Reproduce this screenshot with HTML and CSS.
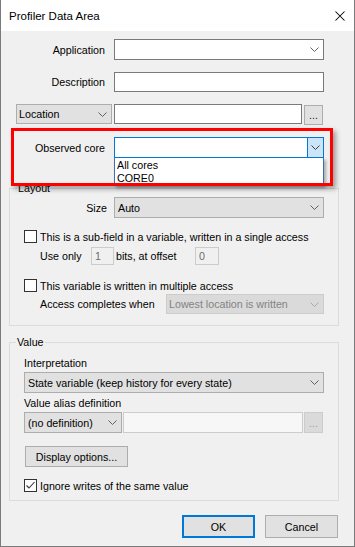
FILE: index.html
```html
<!DOCTYPE html>
<html>
<head>
<meta charset="utf-8">
<title>Profiler Data Area</title>
<link rel="stylesheet" href="styles.css">
</head>
<body>
<div class="window">
  <div class="titlebar">
    <span class="title">Profiler Data Area</span>
    <svg class="close" width="10" height="10" viewBox="0 0 10 10"><path d="M0.5 0.5L9.5 9.5M9.5 0.5L0.5 9.5" stroke="#000" stroke-width="1.05" fill="none"/></svg>
  </div>
  <div class="client">
    <div class="row top-row r-app">
      <span class="lbl">Application</span>
      <div class="combo edit w210"><span class="val"></span><svg class="chev" width="9" height="5" viewBox="0 0 9 5"><path d="M0.5 0.5L4.5 4.5L8.5 0.5" stroke="#606060" fill="none"/></svg></div>
    </div>
    <div class="row top-row r-desc">
      <span class="lbl">Description</span>
      <div class="textbox w210"></div>
    </div>
    <div class="row top-row r-loc">
      <div class="combo drop loc"><span class="val">Location</span><svg class="chev" width="9" height="5" viewBox="0 0 9 5"><path d="M0.5 0.5L4.5 4.5L8.5 0.5" stroke="#606060" fill="none"/></svg></div>
      <div class="textbox loc-text"></div>
      <div class="btn dots">...</div>
    </div>
    <div class="row top-row r-core">
      <span class="lbl">Observed core</span>
      <div class="combo focus w210"><span class="val"></span><span class="drop-btn"><svg width="9" height="5" viewBox="0 0 9 5"><path d="M0.5 0.5L4.5 4.5L8.5 0.5" stroke="#404040" fill="none"/></svg></span></div>
    </div>

    <div class="group g-layout">
      <span class="legend">Layout</span>
      <div class="row r-size">
        <span class="lbl lbl-size">Size</span>
        <div class="combo drop w210"><span class="val">Auto</span><svg class="chev" width="9" height="5" viewBox="0 0 9 5"><path d="M0.5 0.5L4.5 4.5L8.5 0.5" stroke="#606060" fill="none"/></svg></div>
      </div>
      <div class="row check-row c1">
        <span class="check"></span>
        <span>This is a sub-field in a variable, written in a single access</span>
      </div>
      <div class="row r-use">
        <span class="use-lbl">Use only</span>
        <span class="small-in in1">1</span>
        <span class="bits-lbl">bits, at offset</span>
        <span class="small-in in2">0</span>
      </div>
      <div class="row check-row c2">
        <span class="check"></span>
        <span>This variable is written in multiple access</span>
      </div>
      <div class="row r-access">
        <span class="access-lbl">Access completes when</span>
        <div class="combo disabled access-combo"><span class="val">Lowest location is written</span><svg class="chev" width="9" height="5" viewBox="0 0 9 5"><path d="M0.5 0.5L4.5 4.5L8.5 0.5" stroke="#a8a8a8" fill="none"/></svg></div>
      </div>
    </div>

    <div class="group g-value">
      <span class="legend">Value</span>
      <div class="plain-lbl l-interp">Interpretation</div>
      <div class="combo drop full interp"><span class="val">State variable (keep history for every state)</span><svg class="chev" width="9" height="5" viewBox="0 0 9 5"><path d="M0.5 0.5L4.5 4.5L8.5 0.5" stroke="#606060" fill="none"/></svg></div>
      <div class="plain-lbl l-alias">Value alias definition</div>
      <div class="row r-alias">
        <div class="combo drop alias-combo"><span class="val">(no definition)</span><svg class="chev" width="9" height="5" viewBox="0 0 9 5"><path d="M0.5 0.5L4.5 4.5L8.5 0.5" stroke="#606060" fill="none"/></svg></div>
        <div class="textbox disabled-tb alias-text"></div>
        <div class="btn dots btn-disabled">...</div>
      </div>
      <div class="btn display-btn">Display options...</div>
      <div class="row check-row c3">
        <span class="check"><svg width="11" height="11" viewBox="0 0 11 11"><path d="M1.5 5.5L4 8L9.5 2" stroke="#333" stroke-width="1.1" fill="none"/></svg></span>
        <span>Ignore writes of the same value</span>
      </div>
    </div>

    <div class="row buttons">
      <div class="btn dlg-btn default">OK</div>
      <div class="btn dlg-btn">Cancel</div>
    </div>

    <div class="dropdown-list">
      <div class="item">All cores</div>
      <div class="item">CORE0</div>
    </div>
    <div class="highlight"></div>
  </div>
</div>
</body>
</html>
```

FILE: styles.css
```css
* { box-sizing: border-box; margin: 0; padding: 0; }
html, body { width: 355px; height: 547px; overflow: hidden; }
body {
  font-family: "Liberation Sans", Arial, sans-serif;
  font-size: 10.7px;
  color: #000;
  background: #fff;
}
.window {
  width: 355px;
  height: 547px;
  border: 1px solid #7a7a7a;
  border-top: none;
  background: #f0f0f0;
  display: flex;
  flex-direction: column;
}
.titlebar {
  height: 31px;
  flex: none;
  background: #fff;
  display: flex;
  align-items: center;
  justify-content: space-between;
  padding: 0 9px 0 8px;
}
.title { font-size: 11.5px; color: #000; }
.close { display: block; }

.client {
  flex: 1;
  position: relative;
  display: flex;
  flex-direction: column;
}
.row { display: flex; align-items: center; flex: none; }
.top-row { padding-left: 15px; }
.lbl { width: 89px; margin-right: 9px; text-align: right; white-space: nowrap; }
.r-app { margin-top: 8px; height: 21px; }
.r-desc { margin-top: 12px; height: 20px; }
.r-loc { margin-top: 12px; height: 20px; }
.r-core { margin-top: 13px; height: 21px; }

.combo {
  display: flex;
  align-items: center;
  justify-content: space-between;
  height: 21px;
  padding: 0 4px 0 3px;
  border: 1px solid #7a7a7a;
  background: #fff;
  white-space: nowrap;
  flex: none;
}
.combo .chev { display: block; flex: none; }
.combo.drop { background: #e1e1e1; border-color: #adadad; }
.combo.disabled { background: #dadada; border-color: #cccccc; color: #838383; padding-left: 2px; }
.combo.focus { border-color: #0078d7; padding: 0; align-items: stretch; }
.drop-btn {
  width: 16px;
  background: #cce4f7;
  border-left: 1px solid #0078d7;
  display: flex;
  align-items: center;
  justify-content: center;
}
.drop-btn svg { display: block; }
.w210 { width: 210px; }
.textbox {
  height: 20px;
  border: 1px solid #7a7a7a;
  background: #fff;
  flex: none;
}
.loc { width: 96px; height: 20px; margin-right: 2px; padding-left: 2px; }
.loc-text { width: 188px; margin-right: 2px; }
.btn {
  background: #e1e1e1;
  border: 1px solid #adadad;
  display: flex;
  align-items: center;
  justify-content: center;
  flex: none;
  white-space: nowrap;
}
.dots { width: 19px; height: 20px; align-items: flex-end; padding-bottom: 3px; line-height: 1; color: #1a1a4a; }
.r-loc .dots { margin-top: 1px; }
.btn-disabled { background: #dadada; border-color: #cccccc; color: #a0a0a0; }

.group {
  position: relative;
  flex: none;
  width: 330px;
  margin-left: 8px;
  border: 1px solid #dcdcdc;
  padding: 0 14px;
}
.legend {
  position: absolute;
  top: -7px;
  line-height: 13px;
  background: #f0f0f0;
  padding: 0 1px;
}
.g-layout { margin-top: 30px; padding-top: 8px; padding-bottom: 11px; }
.g-layout .legend { left: 7px; }
.r-size { height: 21px; }
.lbl-size { width: 83px; margin-right: 7px; text-align: right; }
.check-row { height: 13px; white-space: nowrap; }
.check {
  width: 13px;
  height: 13px;
  border: 1px solid #333;
  background: #fff;
  margin-right: 3px;
  flex: none;
  display: flex;
  align-items: center;
  justify-content: center;
}
.check svg { display: block; }
.c1 { margin-top: 12px; }
.r-use { margin-top: 4px; height: 18px; padding-left: 16px; white-space: nowrap; }
.use-lbl { width: 51px; }
.small-in {
  height: 18px;
  border: 1px solid #cccccc;
  background: #f0f0f0;
  color: #6d6d6d;
  padding-left: 3px;
  display: flex;
  align-items: center;
  flex: none;
}
.in1 { width: 23px; }
.bits-lbl { width: 79px; margin-left: 2px; }
.in2 { width: 24px; }
.c2 { margin-top: 14px; }
.r-access { margin-top: 2px; height: 20px; padding-left: 16px; white-space: nowrap; }
.access-lbl { width: 126px; }
.access-combo { width: 158px; height: 20px; }

.g-value { margin-top: 16px; padding-bottom: 8px; }
.g-value .legend { left: 6px; }
.plain-lbl { height: 14px; line-height: 14px; white-space: nowrap; }
.l-interp { margin-top: 13px; }
.full { width: 300px; margin-top: 2px; }
.l-alias { margin-top: 3px; }
.r-alias { margin-top: 2px; height: 21px; }
.alias-combo { width: 98px; margin-right: 1px; }
.disabled-tb { background: #f7f7f7; border-color: #cccccc; }
.alias-text { width: 180px; height: 21px; margin-right: 1px; }
.r-alias .dots { height: 21px; }
.display-btn { width: 103px; height: 21px; margin-top: 13px; margin-left: 1px; }
.c3 { margin-top: 12px; }

.buttons { margin-top: 14px; height: 23px; justify-content: flex-end; padding-right: 16px; gap: 10px; }
.dlg-btn { width: 73px; height: 23px; }
.dlg-btn.default { border: 2px solid #0078d7; }

.dropdown-list {
  position: absolute;
  left: 113px;
  top: 127px;
  width: 210px;
  height: 28px;
  background: #fff;
  border: 1px solid #3c6fb0;
  border-top: none;
  padding: 1px 0 0 2px;
  box-shadow: 2px 2px 3px rgba(0, 0, 0, 0.3);
}
.item { height: 13px; line-height: 13px; white-space: nowrap; }
.highlight {
  position: absolute;
  left: 10px;
  top: 97px;
  width: 322px;
  height: 58px;
  border: 3px solid #ff0000;
  box-shadow: 3px 3px 5px rgba(0, 0, 0, 0.35);
}
```
